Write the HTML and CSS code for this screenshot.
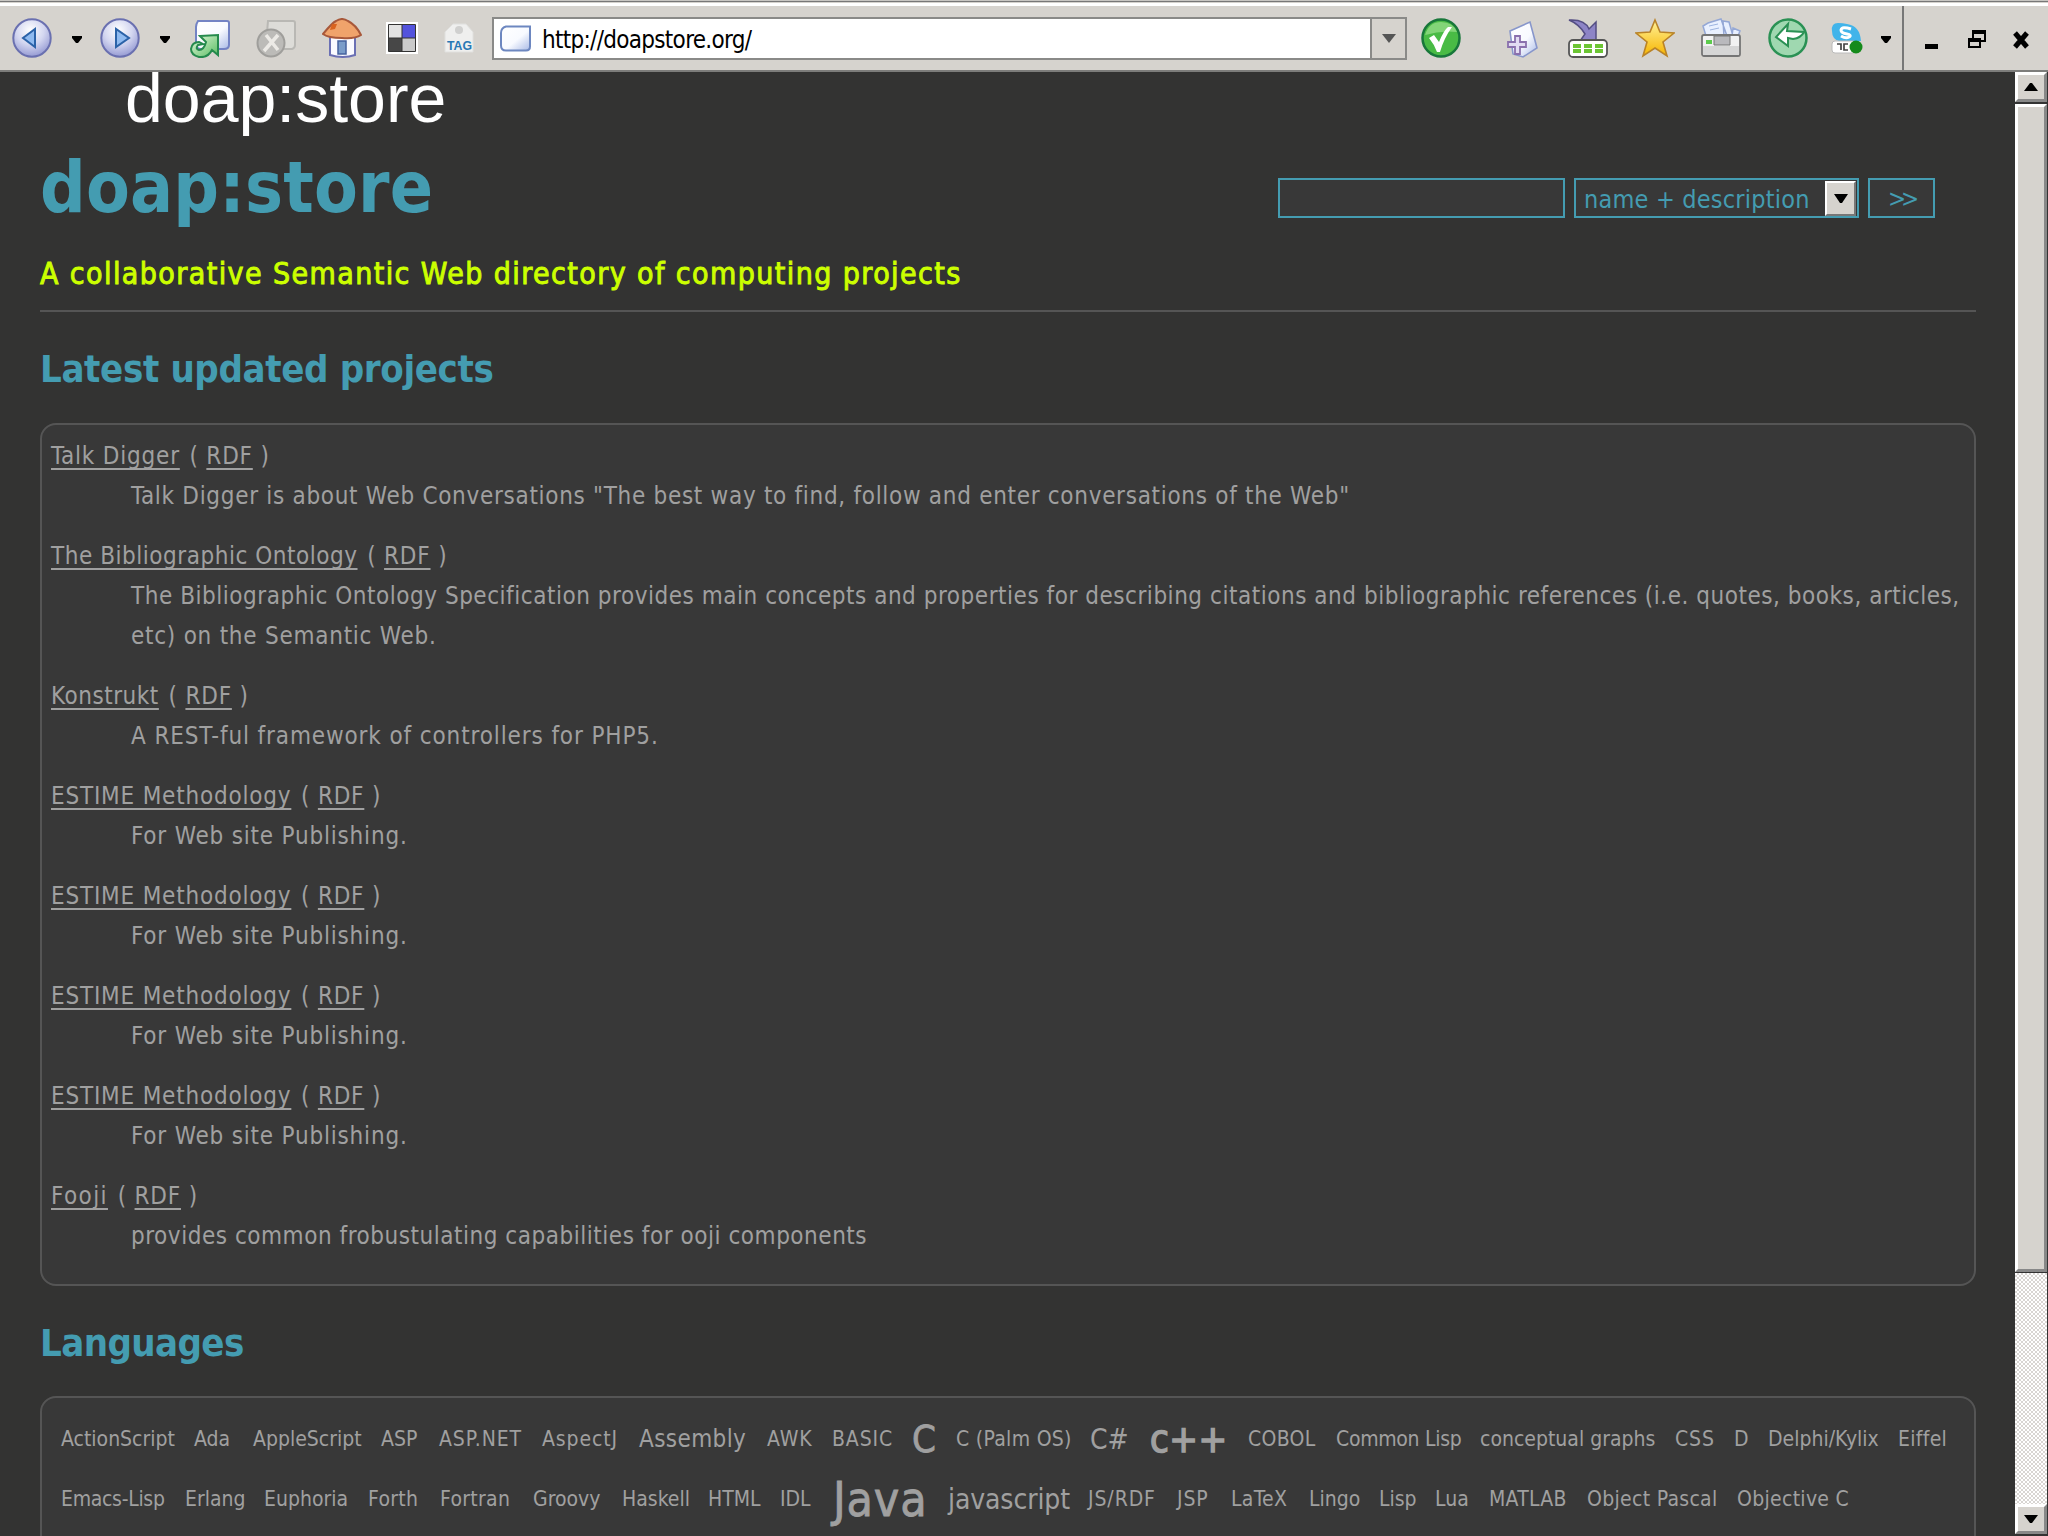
FILE: index.html
```html
<!DOCTYPE html>
<html lang="en">
<head>
<meta charset="utf-8">
<title>doap:store</title>
<link rel="stylesheet" href="styles.css">
</head>
<body>
<header class="toolbar">
  <svg class="icon" viewBox="0 0 40 40"><defs><radialGradient id="orb" cx=".45" cy=".3" r=".75"><stop offset="0" stop-color="#fff"/><stop offset=".5" stop-color="#d3d6f0"/><stop offset="1" stop-color="#8d92cf"/></radialGradient><linearGradient id="pg" x1="0" y1="0" x2="1" y2="1"><stop offset="0" stop-color="#fff"/><stop offset=".55" stop-color="#f8faff"/><stop offset="1" stop-color="#a9bae6"/></linearGradient><linearGradient id="gr" x1="0" y1="0" x2="1" y2="1"><stop offset="0" stop-color="#e5f8dd"/><stop offset="1" stop-color="#58bd62"/></linearGradient></defs><circle cx="20" cy="20" r="18.700" fill="url(#orb)" stroke="#6a70b0" stroke-width="2"/><path d="M23 11v18L11 20z" fill="#8fbaf0" stroke="#2b62a8" stroke-width="2"/></svg>
  <svg class="caret" viewBox="0 0 10 7"><path d="M0 0h10v2L6 7H4L0 2z"/></svg>
  <svg class="icon" viewBox="0 0 40 40"><circle cx="20" cy="20" r="18.700" fill="url(#orb)" stroke="#6a70b0" stroke-width="2"/><path d="M16 11v18L29 20z" fill="#8fbaf0" stroke="#2b62a8" stroke-width="2"/></svg>
  <svg class="caret" viewBox="0 0 10 7"><path d="M0 0h10v2L6 7H4L0 2z"/></svg>
  <svg class="icon" viewBox="0 0 40 40"><path d="M8 3h29q2 0 2 2v22q0 4-5 4H11Q6 31 6 26V9q0-3 2-6z" fill="url(#pg)" stroke="#7383c4" stroke-width="2"/><path d="M10 18l18-1v20l-6-5q-4 8-13 7-8-2-8-8 1-7 8-7l4 2-5 1q-3 4 1 5 5 0 7-8z" fill="url(#gr)" stroke="#258a4d" stroke-width="2"/></svg>
  <svg class="icon" viewBox="0 0 40 40"><path d="M12 3h25q2 0 2 2v22q0 3-3 4H14q-4 0-4-5z" fill="#dddcd8" stroke="#b9b8b4" stroke-width="2"/><circle cx="15" cy="25" r="13.500" fill="#bcbbb8" stroke="#9f9e9b" stroke-width="2"/><path d="M10 17l12 15M22 17L8 33" stroke="#eceae6" stroke-width="3.500"/></svg>
  <svg class="icon" viewBox="0 0 40 40"><path d="M8 19h25v18q-12 4-25 0z" fill="#fafaff" stroke="#6b70b4" stroke-width="2"/><path d="M16 23h8v13h-8z" fill="#7a9cc9" stroke="#45629e" stroke-width="1.500"/><path d="M1 16Q10 5 14 3q6-4 12 0 8 4 13 14-6 4-19 3-14 0-19-4z" fill="#f0a36b" stroke="#a8583a" stroke-width="2"/><path d="M10 6h5l-2 5-5 1z" fill="#d9631f"/></svg>
  <svg class="icon i32" viewBox="0 0 32 32"><path d="M0 0h32v32H0z" fill="#fff"/><path d="M3 3h13v13H3z" fill="#e2e2e2"/><path d="M16 3h13v13H16z" fill="#5353dd"/><path d="M3 16h13v13H3z" fill="#474747"/><path d="M16 16h13v13H16z" fill="#cacaca"/><path d="M2.500 2.500h27v27h-27zM16 2v28M2 16h28" fill="none" stroke="#333" stroke-width="1"/></svg>
  <svg class="icon i32" viewBox="0 0 32 32"><path d="M1 10l8-8h13l7 8v20H1z" fill="#efefee" stroke="#e0e0de"/><circle cx="15" cy="8" r="4" fill="#d0d0cf"/><text x="3" y="27.500" font-family="Liberation Sans" font-weight="700" font-size="13" textLength="25" lengthAdjust="spacingAndGlyphs" fill="#2878b5">TAG</text></svg>
  <div class="address">
    <svg class="page" viewBox="0 0 32 27"><path d="M6 1.500h24v20q0 4-4 4H6q-5 0-5-5V8q0-5 5-6.500z" fill="url(#pg)" stroke="#6d87c0" stroke-width="2"/></svg>
    <span class="url">http://doapstore.org/</span>
    <span class="drop"><svg viewBox="0 0 14 9"><path d="M0 0h14L7 9z" fill="#555"/></svg></span>
  </div>
  <svg class="icon" viewBox="0 0 40 40"><circle cx="20" cy="20" r="18.500" fill="#49bb45" stroke="#18773a" stroke-width="2.500"/><path d="M4 17Q8 4 20 4t16 10Q20 12 4 17z" fill="#9de08f" opacity=".7"/><path d="M8 20l5-3 5 7q5-12 9-15h4q-8 11-12 25h-3q-3-8-8-14z" fill="#fff"/></svg>
  <svg class="icon" viewBox="0 0 40 40"><path d="M4 13L24 4l7 26-14 9-10-3z" fill="url(#pg)" stroke="#8796cb" stroke-width="1.600"/><path d="M9 18h5v6h6v5h-6v7H9v-7H2v-5h7z" fill="#e3dcf2" stroke="#8a70ad" stroke-width="1.800"/></svg>
  <svg class="icon" viewBox="0 0 40 40"><path d="M1 2q16-1 20 9l7-7v19H12l5-7Q11 6 1 2z" fill="#8d84c6" stroke="#544e83" stroke-width="1.500"/><rect x="1" y="22" width="38" height="17" rx="4" fill="#fff" stroke="#555" stroke-width="1.800"/><path d="M5 26h8v4H5zm11 0h8v4h-8zm11 0h8v4h-8zM5 31h8v4H5zm11 0h8v4h-8zm11 0h8v4h-8z" fill="#6cc534"/></svg>
  <svg class="icon" viewBox="0 0 40 40"><defs><linearGradient id="st" x1="0" y1="0" x2="0" y2="1"><stop offset="0" stop-color="#fff29a"/><stop offset="1" stop-color="#f7b500"/></linearGradient></defs><path d="M20 2l5 12 14 1-11 9 4 14-12-8-12 8 4-14L1 15l14-1z" fill="url(#st)" stroke="#b98328" stroke-width="1.600"/></svg>
  <svg class="icon" viewBox="0 0 40 40"><path d="M2 8l5-3 13-4 6 17H5zM22 3l6 1 4 14h-9zM32 10l7 3-2 5h-6z" fill="#e9f0ff" stroke="#95a8d6" stroke-width="1.500"/><path d="M8 8l9-2M9 12l9-2" stroke="#9db4e0"/><rect x="1" y="17" width="38" height="21" rx="2" fill="#f2f2f2" stroke="#757575" stroke-width="1.800"/><path d="M2 28h36v9H2z" fill="#d6d6d6"/><path d="M13 18h16v9H13z" fill="#b9b9bd" stroke="#777"/><path d="M5 22h6v4H5z" fill="#5ccb4d"/></svg>
  <svg class="icon" viewBox="0 0 40 40"><circle cx="20" cy="20" r="18.500" fill="#9fd8b0" stroke="#2a9154" stroke-width="2.500"/><path d="M20 6l-1 7 17 1q-3 6-11 7l-5-1v8L8 19z" fill="#fff" stroke="#2a9154" stroke-width="2"/></svg>
  <svg class="icon i32" viewBox="0 0 32 32"><path d="M1 9Q0 1 7 1q5 0 9 1 13 2 14 17H8Q1 17 1 9z" fill="#41b4ea"/><path d="M20 7q-9-3-10 1 0 3 6 4 5 1 2 3t-8-1" fill="none" stroke="#fff" stroke-width="3"/><rect x="1" y="19" width="24" height="12" rx="3" fill="#fff" stroke="#bbb"/><path d="M6 22h4v6m7-6h-4v6h4" fill="none" stroke="#444" stroke-width="1.700"/><circle cx="25" cy="25" r="6.500" fill="#158a1b"/></svg>
  <svg class="caret" viewBox="0 0 10 7"><path d="M0 0h10v2L6 7H4L0 2z"/></svg>
  <div class="window">
    <svg viewBox="0 0 122 40"><path d="M21 26h13v5H21z"/><path d="M69 14h12v9H69zM65 21h11v8H65z" fill="#d6d3ce" stroke="#000" stroke-width="2"/><path d="M68 14h14M64 22h13" stroke="#000" stroke-width="4"/><path d="M111 15l12 14M123 15l-12 14" stroke="#000" stroke-width="5"/></svg>
  </div>
</header>
<div class="viewport">
<main>
  <div class="caption">doap:store</div>
  <div class="head">
    <h1>doap:store</h1>
    <form class="search">
      <span class="field"></span>
      <span class="field select"><span class="choice">name + description</span><span class="pick"><svg viewBox="0 0 14 9"><path d="M0 0h14L8 9H6z"/></svg></span></span>
      <span class="field go">&gt;&gt;</span>
    </form>
  </div>
  <p class="tagline">A collaborative Semantic Web directory of computing projects</p>
  <h2>Latest updated projects</h2>
  <dl class="box projects">
    <dt><a>Talk Digger</a> ( <a>RDF</a> )</dt>
    <dd class="snug">Talk Digger is about Web Conversations "The best way to find, follow and enter conversations of the Web"</dd>
    <dt><a class="tight">The Bibliographic Ontology</a> ( <a>RDF</a> )</dt>
    <dd class="tight">The Bibliographic Ontology Specification provides main concepts and properties for describing citations and bibliographic references (i.e. quotes, books, articles,<br><span class="end">etc) on the Semantic Web.</span></dd>
    <dt><a class="tight">Konstrukt</a> ( <a>RDF</a> )</dt>
    <dd class="roomy">A REST-ful framework of controllers for PHP5.</dd>
    <dt><a>ESTIME Methodology</a> ( <a>RDF</a> )</dt>
    <dd>For Web site Publishing.</dd>
    <dt><a>ESTIME Methodology</a> ( <a>RDF</a> )</dt>
    <dd>For Web site Publishing.</dd>
    <dt><a>ESTIME Methodology</a> ( <a>RDF</a> )</dt>
    <dd>For Web site Publishing.</dd>
    <dt><a>ESTIME Methodology</a> ( <a>RDF</a> )</dt>
    <dd>For Web site Publishing.</dd>
    <dt><a class="loose">Fooji</a> ( <a>RDF</a> )</dt>
    <dd class="tight">provides common frobustulating capabilities for ooji components</dd>
  </dl>
  <h2 class="second-title">Languages</h2>
  <div class="box languages">
    <div class="row first"><a>ActionScript</a><a>Ada</a><a>AppleScript</a><a>ASP</a><a class="w">ASP.NET</a><a class="w">AspectJ</a><a class="m">Assembly</a><a class="w">AWK</a><a class="w">BASIC</a><a class="xl">C</a><a class="n">C (Palm OS)</a><a class="l">C#</a><a class="xl bold">c++</a><a class="n">COBOL</a><a class="t">Common Lisp</a><a>conceptual graphs</a><a class="w">CSS</a><a>D</a><a>Delphi/Kylix</a><a class="n">Eiffel</a></div>
    <div class="row second"><a class="t">Emacs-Lisp</a><a>Erlang</a><a>Euphoria</a><a class="n">Forth</a><a class="n">Fortran</a><a>Groovy</a><a>Haskell</a><a>HTML</a><a>IDL</a><a class="xxl">Java</a><a class="l">javascript</a><a class="w">JS/RDF</a><a class="w">JSP</a><a class="n">LaTeX</a><a>Lingo</a><a>Lisp</a><a>Lua</a><a class="n">MATLAB</a><a class="n">Object Pascal</a><a class="n">Objective C</a></div>
  </div>
</main>
<aside class="scrollbar">
  <div class="sb up"><svg viewBox="0 0 14 8"><path d="M6 0h2l6 8H0z"/></svg></div>
  <div class="sb thumb"></div>
  <div class="track"></div>
  <div class="sb down"><svg viewBox="0 0 14 8"><path d="M0 0h14L8 8H6z"/></svg></div>
</aside>
</div>
</body>
</html>
```
FILE: styles.css
```css
* { box-sizing: border-box; }
body {
  margin: 0;
  width: 2048px;
  height: 1536px;
  overflow: hidden;
  background: #333332;
  color: #a0a0a0;
  font-family: "DejaVu Sans Condensed", "DejaVu Sans", sans-serif;
  font-stretch: condensed;
  font-size: 24px;
}
svg { display: block; }

/* browser toolbar */
.toolbar {
  display: grid;
  grid-template-columns: 60px 28px 60px 30px 66px 66px 64px 58px 48px 929px 85px 62px 67px 66px 67px 63px 50px 21px 146px;
  align-items: center;
  height: 72px;
  padding: 6px 0 2px 12px;
  background: linear-gradient(#c8c6c2 0 1px, #777 1px 2px, #d6d3ce 2px 3px, #fff 3px 6px, #d6d3ce 6px 70px, #7d7d7b 70px);
}
.icon { width: 40px; height: 40px; }
.i32 { width: 32px; height: 32px; }
.caret { width: 10px; height: 7px; margin-top: 3px; }
.address {
  display: flex;
  align-items: center;
  width: 915px;
  height: 43px;
  margin-top: 1px;
  padding-left: 6px;
  background: #fff;
  border: 2px solid #8a8a88;
}
.page { width: 32px; height: 27px; }
.url { flex: 1; padding: 2px 0 0 10px; color: #000; font-size: 24px; letter-spacing: -.7px; }
.drop {
  display: flex;
  align-items: center;
  justify-content: center;
  width: 35px;
  height: 39px;
  background: #d6d3ce;
  border-left: 2px solid #8a8a88;
}
.drop svg { width: 14px; height: 9px; }
.window { align-self: stretch; display: flex; align-items: center; border-left: 2px solid #777; }
.window svg { width: 122px; height: 40px; overflow: visible; }

/* page */
.viewport { display: grid; grid-template-columns: 2015px 33px; height: 1464px; }
main { padding: 0 39px 0 40px; }
.caption {
  height: 76px;
  padding-left: 85px;
  font: 68px/53px "Liberation Sans", sans-serif;
  color: #fff;
}
.head { display: flex; justify-content: space-between; height: 96px; }
h1 { margin: 0; font-size: 71px; line-height: 80px; letter-spacing: .2px; color: #449cb1; }
.search { display: flex; gap: 9px; margin: 30px 41px 0 0; height: 40px; color: #449cb1; }
.field { display: flex; align-items: center; width: 287px; height: 40px; border: 2px solid #449cb1; background: #383838; font-size: 25px; letter-spacing: .2px; }
.select { width: 285px; padding: 0 1px 0 8px; justify-content: space-between; }
.choice { padding-top: 2px; }
.pick { display: flex; align-items: center; justify-content: center; width: 31px; height: 35px; background: #d6d3ce; border: 2px solid; border-color: #fff #777 #777 #fff; }
.pick svg { width: 14px; height: 9px; }
.go { width: 67px; padding: 1px 0 0 18px; font-size: 24px; letter-spacing: -5px; }
.tagline {
  margin: 0;
  height: 68px;
  line-height: 60px;
  border-bottom: 2px solid #555;
  font-size: 30px;
  letter-spacing: 1.41px;
  color: #cf0;
  -webkit-text-stroke: .9px #cf0;
}
h2 { margin: 0; height: 111px; font-size: 38px; line-height: 114px; letter-spacing: -.37px; color: #449cb1; }
.second-title { height: 110px; letter-spacing: -.6px; }
.box { margin: 0; border: 2px solid #555; border-radius: 16px; background: #383838; }

.projects { height: 863px; padding: 11px 0 0 9px; line-height: 40px; letter-spacing: .8px; }
.projects a { text-decoration: underline; text-decoration-thickness: 2px; text-underline-offset: 4px; text-decoration-skip-ink: none; }
dt a:first-child { margin-right: 2px; }
dd { margin: 0 0 20px 80px; white-space: nowrap; }
.snug { letter-spacing: .7px; }
.tight { letter-spacing: .53px; }
.end { letter-spacing: .75px; }
.roomy { letter-spacing: .88px; }
.loose { letter-spacing: 1.4px; }

.languages { height: 200px; padding: 11px 0 0 19px; font-size: 21px; }
.row { display: grid; height: 60px; align-items: center; white-space: nowrap; }
.first { grid-template-columns: 133px 59px 128px 58px 103px 97px 128px 65px 80px 44px 134px 60px 98px 88px 144px 195px 59px 34px 130px 60px; }
.second { grid-template-columns: 124px 79px 104px 72px 93px 89px 86px 72px 53px 115px 140px 89px 54px 78px 70px 56px 54px 98px 150px 120px; }
.t { letter-spacing: -.3px; }
.n { letter-spacing: .3px; }
.w { letter-spacing: .9px; }
.m { font-size: 24px; letter-spacing: .4px; }
.l { font-size: 28px; letter-spacing: -.1px; }
.xl { font-size: 38px; -webkit-text-stroke: .8px; letter-spacing: .5px; }
.bold { -webkit-text-stroke: 1.5px; }
.xxl { font-size: 48px; letter-spacing: .8px; -webkit-text-stroke: .8px; }

/* scroll bar */
.scrollbar { display: flex; flex-direction: column; height: 1464px; background: #333; padding-right: 1px; }
.sb { display: flex; align-items: center; justify-content: center; background: #d6d3ce; border: 3px solid; border-color: #fff #888 #888 #fff; }
.sb svg { width: 14px; height: 8px; }
.up, .down { height: 30px; flex: none; }
.thumb { height: 1168px; flex: none; margin-top: 2px; }
.track { flex: 1; margin-top: 1px; background: repeating-conic-gradient(#d8d5d2 0 25%, #fff 0 50%) 0 0 / 4px 4px; }
.down { margin-bottom: 2px; }
```
